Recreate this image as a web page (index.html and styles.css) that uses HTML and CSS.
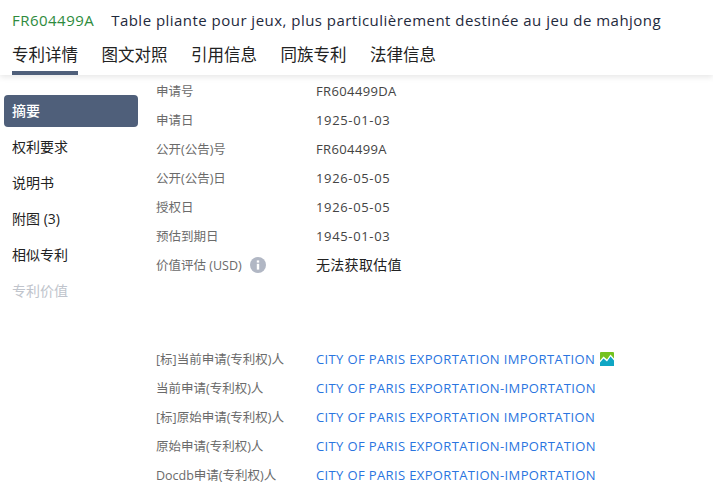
FILE: index.html
```html
<!DOCTYPE html>
<html lang="zh-CN">
<head>
  <meta charset="UTF-8" />
  <meta name="viewport" content="width=device-width, initial-scale=1.0"/>
  <title>专利详情</title>
  <link rel="stylesheet" href="styles.css">
</head>
<body>

  <header class="top">
    <div class="title">
      <span class="pn">FR604499A</span>
      <span class="name">Table pliante pour jeux, plus particulièrement destinée au jeu de mahjong</span>
    </div>
    <nav class="tabs">
      <a class="tab active">专利详情</a>
      <a class="tab">图文对照</a>
      <a class="tab">引用信息</a>
      <a class="tab">同族专利</a>
      <a class="tab">法律信息</a>
    </nav>
  </header>

  <div class="main">
    <aside class="side">
      <a class="side-item active">摘要</a>
      <a class="side-item">权利要求</a>
      <a class="side-item">说明书</a>
      <a class="side-item">附图 (3)</a>
      <a class="side-item">相似专利</a>
      <a class="side-item disabled">专利价值</a>
    </aside>

    <section class="content">
      <div class="group">
        <div class="row"><span class="label">申请号</span><span class="value">FR604499DA</span></div>
        <div class="row"><span class="label">申请日</span><span class="value date">1925-01-03</span></div>
        <div class="row"><span class="label">公开(公告)号</span><span class="value">FR604499A</span></div>
        <div class="row"><span class="label">公开(公告)日</span><span class="value date">1926-05-05</span></div>
        <div class="row"><span class="label">授权日</span><span class="value date">1926-05-05</span></div>
        <div class="row"><span class="label">预估到期日</span><span class="value date">1945-01-03</span></div>
        <div class="row">
          <span class="label">价值评估 (USD)
            <svg class="info" viewBox="0 0 16 16" width="16" height="16">
              <circle cx="8" cy="8" r="8" fill="#b1b7c4"/>
              <rect x="6.8" y="3.4" width="2.4" height="2.2" fill="#fff"/>
              <rect x="6.8" y="6.8" width="2.4" height="5.8" fill="#fff"/>
            </svg>
          </span>
          <span class="value dark">无法获取估值</span>
        </div>
      </div>

      <div class="group owners">
        <div class="row">
          <span class="label">[标]当前申请(专利权)人</span>
          <span class="value link">CITY OF PARIS EXPORTATION IMPORTATION
            <svg class="chart" viewBox="0 0 14 14" width="14" height="14">
              <rect width="14" height="14" rx="1" fill="#74c21f"/>
              <path d="M0 14V8.5L3.5 4.5L7 7.5L10.5 2.5L14 6.5V14Z" fill="#fff"/>
              <path d="M0 14V10.5L3.5 6.5L7 9.5L10.5 4.5L14 8.5V14H0Z" fill="#0fa6c4"/>
            </svg>
          </span>
        </div>
        <div class="row"><span class="label">当前申请(专利权)人</span><span class="value link">CITY OF PARIS EXPORTATION-IMPORTATION</span></div>
        <div class="row"><span class="label">[标]原始申请(专利权)人</span><span class="value link">CITY OF PARIS EXPORTATION IMPORTATION</span></div>
        <div class="row"><span class="label">原始申请(专利权)人</span><span class="value link">CITY OF PARIS EXPORTATION-IMPORTATION</span></div>
        <div class="row"><span class="label">Docdb申请(专利权)人</span><span class="value link">CITY OF PARIS EXPORTATION-IMPORTATION</span></div>
      </div>
    </section>
  </div>

</body>
</html>
```

FILE: styles.css
```css
html, body {
  height: 495px;
  overflow: hidden;
}
body {
  margin: 0;
  font-family: "Open Sans", "Noto Sans CJK SC", sans-serif;
  background-color: #fff;
  color: #333;
}
.top {
  height: 75px;
  padding: 0 12px;
  box-shadow: 0 2px 6px rgba(0, 0, 0, 0.1);
}
.title {
  height: 40px;
  display: flex;
  align-items: center;
  font-size: 15px;
  letter-spacing: 0.47px;
  color: #1f2a3d;
}
.pn {
  color: #2e8b3d;
  margin-right: 17px;
}
.tabs {
  display: flex;
  gap: 23.5px;
}
.tab {
  height: 35px;
  line-height: 30px;
  box-sizing: border-box;
  font-size: 16.5px;
  color: #222;
}
.tab.active {
  border-bottom: 4px solid #4f5f7a;
}
.main {
  display: flex;
}
.side {
  width: 134px;
  margin: 20px 0 0 4px;
}
.side-item {
  display: block;
  height: 32px;
  line-height: 32px;
  margin-bottom: 4px;
  padding-left: 8px;
  font-size: 14px;
  color: #222;
  border-radius: 4px;
}
.side-item.active {
  background-color: #4f5f7a;
  color: #fff;
  font-weight: 500;
}
.side-item.disabled {
  color: #c0c4cc;
}
.content {
  margin: 1.5px 0 0 18px;
}
.owners {
  margin-top: 65px;
}
.row {
  display: flex;
  align-items: center;
  height: 29px;
}
.label {
  width: 160px;
  margin-bottom: 2px;
  display: flex;
  align-items: center;
  font-size: 12.5px;
  color: #6b6b6b;
}
.value {
  display: flex;
  align-items: center;
  line-height: 20px;
  font-size: 13px;
  letter-spacing: 0.37px;
  color: #444;
}
.value.date {
  letter-spacing: 0.65px;
}
.value.dark {
  font-size: 14px;
  letter-spacing: 0.3px;
  color: #222;
}
.value.link {
  color: #2a75e0;
}
.info {
  margin: 2px 0 0 8px;
}
.chart {
  margin-left: 5px;
}
```
